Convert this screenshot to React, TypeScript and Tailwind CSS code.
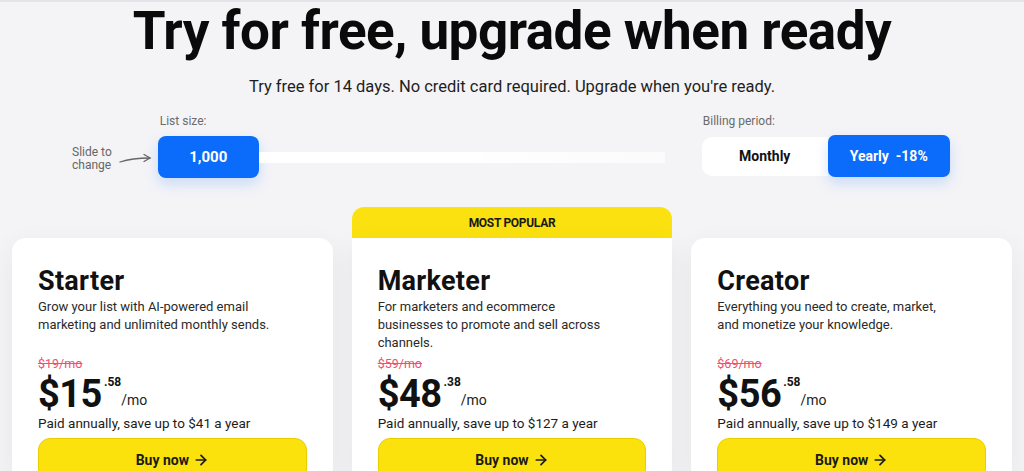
import { ArrowRight } from 'lucide-react';

type Plan = {
  name: string;
  blurb: string;
  was: string;
  dollars: string;
  cents: string;
  saving: string;
  popular?: boolean;
};

const plans: Plan[] = [
  {
    name: 'Starter',
    blurb: 'Grow your list with AI-powered email marketing and unlimited monthly sends.',
    was: '$19/mo',
    dollars: '$15',
    cents: '.58',
    saving: 'Paid annually, save up to $41 a year',
  },
  {
    name: 'Marketer',
    blurb: 'For marketers and ecommerce businesses to promote and sell across channels.',
    was: '$59/mo',
    dollars: '$48',
    cents: '.38',
    saving: 'Paid annually, save up to $127 a year',
    popular: true,
  },
  {
    name: 'Creator',
    blurb: 'Everything you need to create, market, and monetize your knowledge.',
    was: '$69/mo',
    dollars: '$56',
    cents: '.58',
    saving: 'Paid annually, save up to $149 a year',
  },
];

function PlanCard({ plan }: { plan: Plan }) {
  return (
    <div className="flex flex-col">
      {plan.popular ? (
        <div className="flex h-[31px] items-center justify-center rounded-t-[12px] bg-[#fbe10f] text-[12px] font-bold tracking-tight text-[#1a1a1a]">
          MOST POPULAR
        </div>
      ) : (
        <div className="h-[31px]" />
      )}
      <div
        className={`flex flex-1 flex-col bg-white px-[26px] pt-[27px] shadow-[0_8px_30px_rgba(20,20,40,0.06)] ${
          plan.popular ? 'rounded-b-[14px]' : 'rounded-[14px]'
        }`}
      >
        <h3 className="text-[27px] font-bold leading-[32px] tracking-[0.3px] text-[#111]">{plan.name}</h3>
        <p className="mt-[1px] h-[54px] max-w-[232px] text-[13px] leading-[18px] text-[#2a2a2a]">
          {plan.blurb}
        </p>
        <p className="mt-[4px] text-[12.5px] leading-[16px] text-[#f0506e] line-through">{plan.was}</p>
        <div className="mt-[3px] flex items-start">
          <span className="text-[38px] font-bold leading-[38px] tracking-[-0.5px] text-[#111]">{plan.dollars}</span>
          <span className="ml-[2px] mt-[1px] text-[12px] font-bold leading-none text-[#111]">{plan.cents}</span>
          <span className="mt-[18px] text-[14px] leading-none text-[#222]">/mo</span>
        </div>
        <p className="mt-[1px] text-[13.5px] leading-[18px] text-[#1c1c1c]">{plan.saving}</p>
        <button
          type="button"
          className="mt-[6px] flex h-[44px] w-full items-center justify-center gap-1 rounded-[12px] border border-[#e9cf00] bg-[#fbe20d] text-[14px] font-bold text-[#1a1a1a]"
        >
          Buy now
          <ArrowRight size={16} strokeWidth={2.6} />
        </button>
      </div>
    </div>
  );
}

export default function App() {
  return (
    <div className="min-h-[471px] overflow-hidden border-t-2 border-[#e4e4e8] bg-[#f4f4f7] font-['Roboto',sans-serif]">
      <h1 className="text-center text-[53px] font-bold leading-[58px] tracking-[-0.5px] text-[#0a0a0a]">
        Try for free, upgrade when ready
      </h1>
      <p className="mt-[17px] text-center text-[16.5px] leading-[20px] text-[#1e1e1e]">
        Try free for 14 days. No credit card required. Upgrade when you're ready.
      </p>

      <div className="mt-[17px] flex">
        {/* list size slider */}
        <div className="ml-[72px] flex items-end">
          <div className="mb-[6px] flex items-center gap-[7px]">
            <span className="text-[12px] leading-[13px] text-[#666]">
              Slide to
              <br />
              change
            </span>
            <svg width="33" height="12" viewBox="0 0 33 12" fill="none" stroke="#666" strokeWidth="1.3" strokeLinecap="round">
              <path d="M1 9 C 10 6, 20 5, 31 5" />
              <path d="M25 1.5 L31 5 L25 8.5" />
            </svg>
          </div>
          <div className="ml-[6px] flex flex-col">
            <span className="ml-[2px] text-[12px] leading-[14px] text-[#6b6b6b]">List size:</span>
            <div className="mt-[8px] flex items-center">
              <div className="flex h-[42px] w-[101px] items-center justify-center rounded-[8px] bg-[#0b6bfb] text-[15px] font-bold text-white shadow-[0_6px_14px_rgba(11,107,251,0.18)]">
                1,000
              </div>
              <div className="h-[11px] w-[406px] bg-gradient-to-r from-white via-white to-white/60" />
            </div>
          </div>
        </div>

        {/* billing period toggle */}
        <div className="ml-[37px] flex flex-col">
          <span className="ml-[1px] text-[12px] leading-[14px] text-[#6b6b6b]">Billing period:</span>
          <div className="mt-[7px] flex items-center">
            <div className="flex h-[39px] w-[126px] items-center justify-center rounded-l-[10px] bg-white text-[14px] font-bold text-[#111]">
              Monthly
            </div>
            <div className="flex h-[42px] w-[122px] items-center justify-center rounded-[7px] bg-[#0b6bfb] text-[14px] font-bold text-white shadow-[0_6px_14px_rgba(11,107,251,0.18)]">
              Yearly&nbsp;&nbsp;-18%
            </div>
          </div>
        </div>
      </div>

      <div className="mx-auto mt-[29px] grid w-[1000px] grid-cols-3 gap-[19px]">
        {plans.map((p) => (
          <PlanCard key={p.name} plan={p} />
        ))}
      </div>
    </div>
  );
}
